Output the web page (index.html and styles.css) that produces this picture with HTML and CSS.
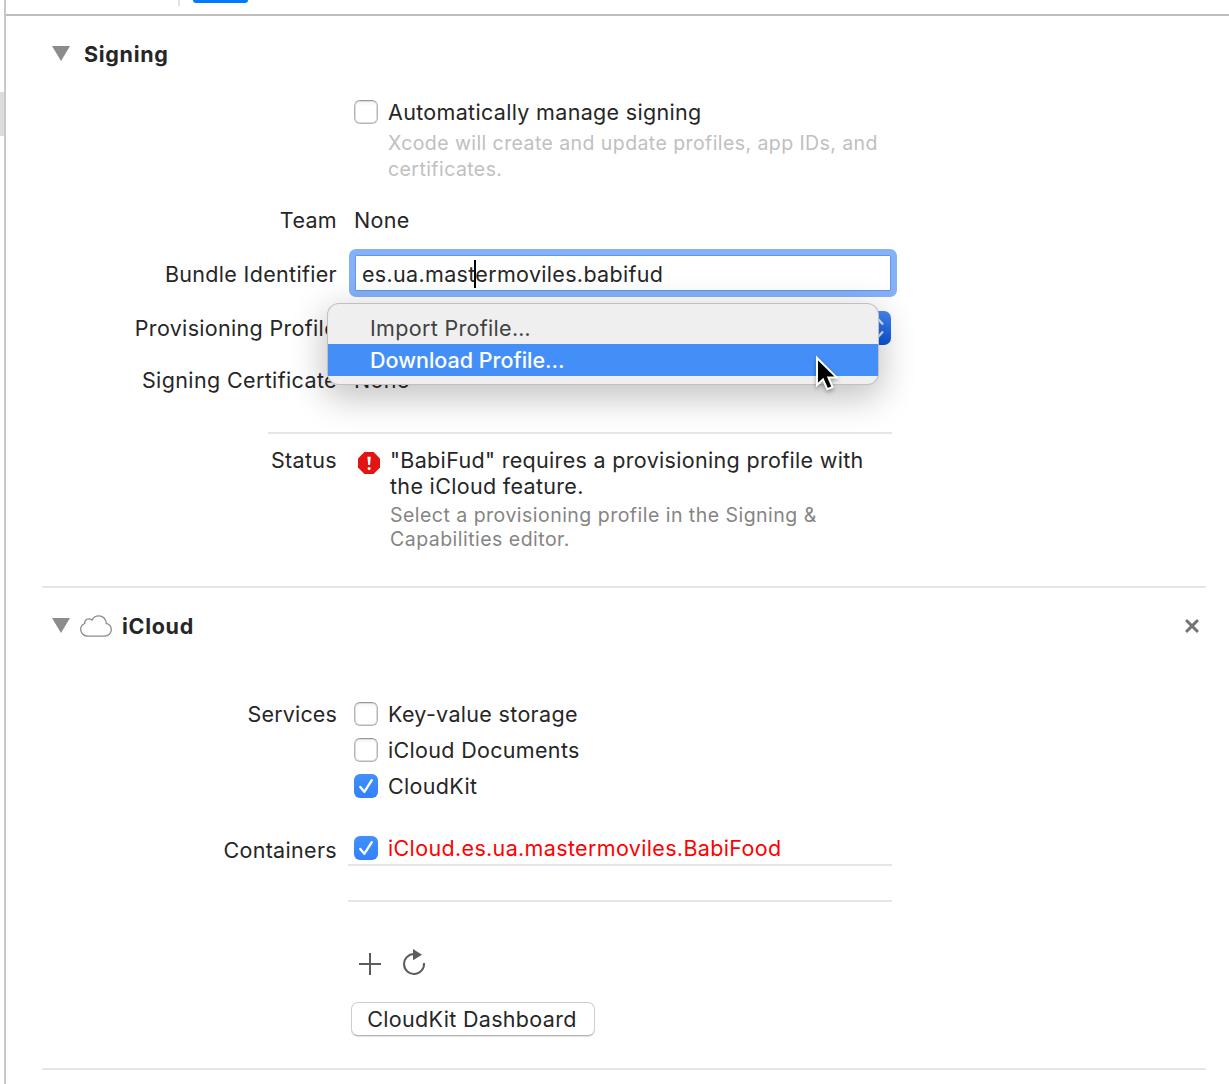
FILE: index.html
```html
<!DOCTYPE html>
<html lang="en">
<head>
<meta charset="utf-8">
<title>Signing &amp; Capabilities</title>
<link rel="stylesheet" href="styles.css">
</head>
<body>
<aside class="gutter"><div class="gutter-thumb"></div></aside>
<main class="editor">
  <header class="tabbar"><div class="tab-divider"></div><div class="tab-active"></div></header>

  <section class="section signing">
    <h2 class="heading">
      <svg class="disclosure" width="18" height="15" viewBox="0 0 18 15"><path d="M0 0H18L9 15Z" fill="#8c8c8c"/></svg>
      <span>Signing</span>
    </h2>
    <div class="row row-auto">
      <div class="check-group">
        <span class="checkbox"></span>
        <div>
          <div>Automatically manage signing</div>
          <p class="hint hint-light">Xcode will create and update profiles, app IDs, and<br>certificates.</p>
        </div>
      </div>
    </div>
    <div class="row row-team"><span class="label">Team</span><span>None</span></div>
    <div class="row row-bundle">
      <span class="label">Bundle Identifier</span>
      <div class="text-field">es.ua.mastermoviles.babifud<i class="caret"></i></div>
    </div>
    <div class="row row-profile">
      <span class="label">Provisioning Profile</span>
      <div class="popup-button">
        <svg width="24" height="34" viewBox="0 0 24 34"><path d="M6 13.500L11 8L16 13.500M6 20.500L11 26L16 20.500" fill="none" stroke="#d8e5ff" stroke-width="2.200"/></svg>
      </div>
      <div class="menu">
        <div class="menu-item">Import Profile…</div>
        <div class="menu-item selected">Download Profile…</div>
        <svg class="pointer" width="30" height="42" viewBox="0 0 30 42"><path d="M4 3V30L10 24.400L14.300 34.200L19.600 32L15.400 22.400H23.600Z" fill="#000" stroke="#fff" stroke-width="2"/></svg>
      </div>
    </div>
    <div class="row row-cert"><span class="label">Signing Certificate</span><span>None</span></div>
    <div class="status-rule"></div>
    <div class="row row-status">
      <span class="label">Status</span>
      <div class="status">
        <svg class="error" width="22" height="22" viewBox="0 0 22 22"><path d="M6.400 0H15.600L22 6.400V15.600L15.600 22H6.400L0 15.600V6.400Z" fill="#e21414"/><path d="M9.400 4.800H12.800L12 13H10.200Z" fill="#fff"/><circle cx="11.100" cy="16.400" r="1.500" fill="#fff"/></svg>
        <div>
          <div>"BabiFud" requires a provisioning profile with<br>the iCloud feature.</div>
          <p class="hint hint-dark">Select a provisioning profile in the Signing &amp;<br>Capabilities editor.</p>
        </div>
      </div>
    </div>
  </section>

  <section class="section icloud">
    <h2 class="heading">
      <svg class="disclosure" width="18" height="15" viewBox="0 0 18 15"><path d="M0 0H18L9 15Z" fill="#8c8c8c"/></svg>
      <svg class="cloud" width="32" height="22" viewBox="0 0 32 22"><path d="M8 21.200H24.500C28.500 21.200 31.300 18.300 31.300 14.800C31.300 11.400 29.300 9 26.200 8.300C26.200 4 23 .8 18.800 .8C15.600 .8 13.100 2.500 12 5.100C8.600 2.300 4.300 4.500 4.700 8.500C2.300 9.500 .7 11.600 .7 14.300C.7 18.200 3.800 21.200 8 21.200Z" fill="#fff" stroke="#8a8a8a" stroke-width="1.300"/></svg>
      <span>iCloud</span>
      <svg class="close" width="14" height="14" viewBox="0 0 14 14"><path d="M2 2L12 12M12 2L2 12" stroke="#747474" stroke-width="3.100" stroke-linecap="round"/></svg>
    </h2>
    <div class="row row-services">
      <span class="label">Services</span>
      <div class="services">
        <div class="check-group"><span class="checkbox"></span><span>Key-value storage</span></div>
        <div class="check-group"><span class="checkbox"></span><span>iCloud Documents</span></div>
        <div class="check-group"><span class="checkbox checked"><svg width="24" height="24" viewBox="0 0 24 24"><path d="M6.300 13L10.300 17.800L17.800 6.200" fill="none" stroke="#fff" stroke-width="2.300" stroke-linecap="round" stroke-linejoin="round"/></svg></span><span>CloudKit</span></div>
      </div>
    </div>
    <div class="row row-containers">
      <span class="label">Containers</span>
      <div class="containers">
        <div class="container-item check-group"><span class="checkbox checked"><svg width="24" height="24" viewBox="0 0 24 24"><path d="M6.300 13L10.300 17.800L17.800 6.200" fill="none" stroke="#fff" stroke-width="2.300" stroke-linecap="round" stroke-linejoin="round"/></svg></span><span class="missing">iCloud.es.ua.mastermoviles.BabiFood</span></div>
        <div class="container-item"></div>
      </div>
    </div>
    <div class="tools">
      <svg class="add" width="22" height="22" viewBox="0 0 22 22"><path d="M11 0V22M0 11H22" stroke="#5c5c5c" stroke-width="2"/></svg>
      <svg width="24" height="28" viewBox="0 0 24 28"><path d="M12 5A10 10 0 1 0 22 14" fill="none" stroke="#5c5c5c" stroke-width="2"/><path d="M11 0L20 5.700L11 11.300Z" fill="#5c5c5c"/></svg>
    </div>
    <button class="button">CloudKit Dashboard</button>
  </section>
</main>
</body>
</html>
```
FILE: styles.css
```css
* { box-sizing: border-box; }
body {
  margin: 0;
  height: 1084px;
  display: flex;
  overflow: hidden;
  background: #fff;
  color: #262626;
  font: 21.5px/26px Inter, "Liberation Sans", sans-serif;
  letter-spacing: .32px;
}
h2, p { margin: 0; font-size: inherit; }
svg { display: block; flex: none; }
.gutter { width: 4px; padding-top: 92px; }
.gutter-thumb { height: 44px; background: #dcdcdc; }
.editor { flex: 1; border-left: 2px solid #c8c8c8; }
.tabbar { display: flex; height: 16px; border-bottom: 2px solid #bebebe; }
.tab-divider { width: 2px; height: 6px; margin-left: 172px; background: #e2e2e2; }
.tab-active { width: 55px; height: 3px; margin-left: 12.5px; border-radius: 0 0 6px 6px; background: #007aff; }

.section { margin: 0 23px 0 36px; border-bottom: 2px solid #e5e5e5; }
.signing { height: 572px; padding-top: 25px; }
.icloud { height: 482px; padding-top: 25px; }
.heading { display: flex; align-items: center; height: 26px; padding-left: 10px; font-weight: 700; letter-spacing: .7px; }
.disclosure { margin-bottom: 1px; }
.signing .heading span { margin-left: 14px; }
.cloud { margin-left: 10px; }
.icloud .heading span { margin-left: 10px; }
.close { margin-left: auto; margin-right: 7px; }

.row { display: grid; grid-template-columns: 295px 1fr; column-gap: 17px; position: relative; }
.label { text-align: right; white-space: nowrap; }
.check-group { display: flex; gap: 10px; white-space: nowrap; }
.checkbox {
  flex: none;
  width: 24px;
  height: 24px;
  margin-top: 1px;
  border: 1px solid #b4b4b4;
  border-top-color: #999;
  border-radius: 6px;
  background: linear-gradient(#f4f4f4, #fff 5px);
  box-shadow: inset 0 0 0 1px #dcdcdc;
}
.checkbox.checked { border: 0; background: linear-gradient(#4190fb, #3381fb); box-shadow: none; }
.hint { font-size: 19.5px; letter-spacing: .42px; }
.hint-light { margin-top: 5px; color: #c0c0c0; }
.hint-dark { margin-top: 4px; line-height: 24px; color: #858585; letter-spacing: .475px; }

.row-auto { margin-top: 32px; }
.row-auto .check-group { grid-column: 2; }
.row-team { margin-top: 25px; }
.row-bundle { margin-top: 16px; height: 48px; }
.row-bundle .label { padding-top: 12px; }
.text-field {
  position: relative;
  width: 548px;
  height: 48px;
  margin-left: -5px;
  padding: 6px 7px;
  border: 6px solid #85b1f9;
  border-radius: 7px;
  box-shadow: inset 0 0 0 1px #6496e2;
}
.caret { position: absolute; left: 119px; top: 5px; width: 2px; height: 28px; background: #000; }
.row-profile { margin-top: 18px; }
.popup-button {
  display: flex;
  justify-content: flex-end;
  width: 537px;
  height: 34px;
  margin: -4px 0;
  border-radius: 7px;
  background: linear-gradient(#4787f4, #0755d9);
}
.menu {
  position: absolute;
  z-index: 2;
  left: 286px;
  top: -11px;
  width: 550px;
  height: 80px;
  padding: 8px 0;
  border-radius: 11px;
  background: #efeff0;
  box-shadow: 0 0 0 1px #c0c0c0, 0 10px 34px 4px rgba(0, 0, 0, .24);
}
.menu-item { height: 32px; padding: 3px 42px; color: #424242; }
.menu-item.selected { background: #448ff7; color: #fff; font-weight: 500; letter-spacing: 0; }
.pointer { position: absolute; left: 485px; top: 51px; filter: drop-shadow(0 2px 2px rgba(0, 0, 0, .35)); }
.row-cert { margin-top: 26px; }
.row-cert .label { letter-spacing: .37px; }
.status-rule { width: 624px; height: 2px; margin: 39px 0 0 226px; background: #e5e5e5; }
.row-status { margin-top: 13px; }
.status { display: flex; gap: 10px; margin-left: 4px; white-space: nowrap; }
.error { margin-top: 5px; }

.row-services { margin-top: 62px; }
.row-services .label { letter-spacing: .15px; }
.services { display: grid; gap: 10px; }
.row-containers { margin-top: 36px; }
.row-containers .label { padding-top: 2px; }
.containers { width: 544px; margin-left: -6px; }
.container-item { height: 36px; padding-left: 6px; border-bottom: 2px solid #e5e5e5; }
.container-item:first-child { height: 31px; }
.missing { color: #ff0000; letter-spacing: .345px; }
.tools { display: flex; align-items: center; gap: 21px; height: 28px; margin: 47px 0 0 317px; }
.add { margin-top: 2px; }
.button {
  display: block;
  width: 244px;
  height: 34px;
  margin: 25px 0 0 309px;
  padding: 0 2px 0 0;
  border: 1px solid #cfcfcf;
  border-bottom-color: #b4b4b4;
  border-radius: 7px;
  background: #fff;
  box-shadow: 0 1px 1px rgba(0, 0, 0, .12);
  color: inherit;
  font: inherit;
  letter-spacing: .32px;
}
```
